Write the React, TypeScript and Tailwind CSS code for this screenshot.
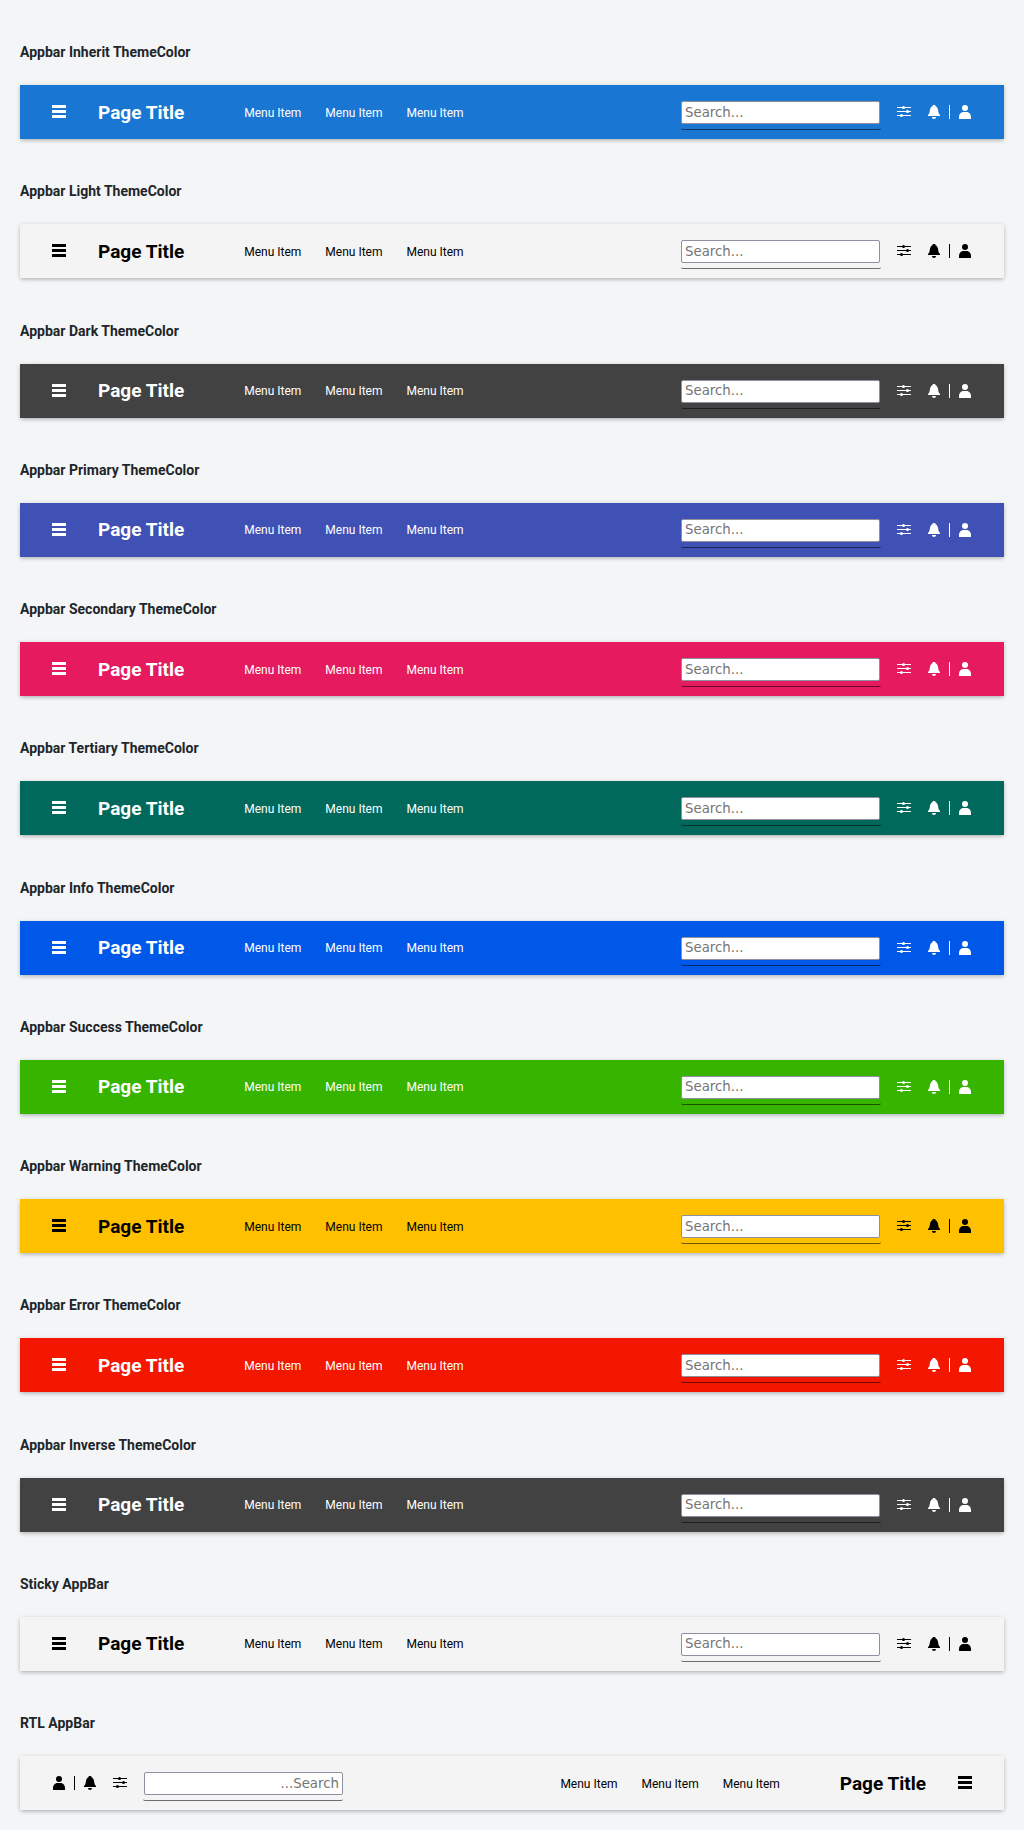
import React from "react";

type BarProps = { tone: string; dir?: "ltr" | "rtl"; label: string };

const bars: BarProps[] = [
  { label: "Appbar Inherit ThemeColor", tone: "bg-[#1976d2] text-white" },
  { label: "Appbar Light ThemeColor", tone: "bg-[#f4f4f4] text-black" },
  { label: "Appbar Dark ThemeColor", tone: "bg-[#424242] text-white" },
  { label: "Appbar Primary ThemeColor", tone: "bg-[#3f51b5] text-white" },
  { label: "Appbar Secondary ThemeColor", tone: "bg-[#e51a5f] text-white" },
  { label: "Appbar Tertiary ThemeColor", tone: "bg-[#00695c] text-white" },
  { label: "Appbar Info ThemeColor", tone: "bg-[#0058e9] text-white" },
  { label: "Appbar Success ThemeColor", tone: "bg-[#37b400] text-white" },
  { label: "Appbar Warning ThemeColor", tone: "bg-[#ffc000] text-black" },
  { label: "Appbar Error ThemeColor", tone: "bg-[#f31700] text-white" },
  { label: "Appbar Inverse ThemeColor", tone: "bg-[#424242] text-white" },
  { label: "Sticky AppBar", tone: "bg-[#f4f4f4] text-black" },
  { label: "RTL AppBar", tone: "bg-[#f4f4f4] text-black", dir: "rtl" },
];

function Icon({ children }: { children: React.ReactNode }) {
  return (
    <svg viewBox="0 0 16 16" className="block size-4" fill="currentColor" aria-hidden="true">
      {children}
    </svg>
  );
}

function AppBar({ tone, dir = "ltr", label }: BarProps) {
  return (
    <header
      dir={dir}
      aria-label={label}
      className={`flex h-[54px] items-center px-4 shadow-[0_2px_4px_-1px_rgba(0,0,0,0.2),0_1px_5px_0_rgba(0,0,0,0.14)] ${tone}`}
    >
      <button type="button" aria-label="Menu" className="ms-[15px] shrink-0">
        <Icon>
          <path d="M1 1h14v3H1zM1 6h14v3H1zM1 11h14v3H1z" />
        </Icon>
      </button>
      <h1 className="ms-[31px] shrink-0 whitespace-nowrap pt-px text-[19px] leading-7 font-bold">Page Title</h1>
      <nav className="ms-[60px] pt-px">
        <ul className="flex gap-6 text-xs">
          {[1, 2, 3].map((n) => (
            <li key={n}>
              <a href="#" className="whitespace-nowrap">
                Menu Item
              </a>
            </li>
          ))}
        </ul>
      </nav>
      <div className="ms-auto flex items-center">
        <span className="mt-[7px] flex w-[200px] rounded-[2px] border-b border-black/55 pb-[5px]">
          <input
            type="text"
            placeholder="Search..."
            aria-label={`Search ${label}`}
            className="h-[23px] w-[199px] rounded-[2px] border border-[#8f8f9d] bg-white px-[3px] pb-px font-['DejaVu_Sans',sans-serif] [font-size:revert] leading-5 text-black placeholder:text-[#757575]"
          />
        </span>
        <button type="button" aria-label="Settings" className="ms-[15px]">
          <Icon>
            <path d="M1 3h14v1H1zM1 7h14v1H1zM1 11h14v1H1z" />
            <circle cx="7.5" cy="3.5" r="1.5" />
            <circle cx="11.5" cy="7.5" r="1.5" />
            <circle cx="5.5" cy="11.5" r="1.5" />
          </Icon>
        </button>
        <button type="button" aria-label="Notifications" className="ms-[14px]">
          <Icon>
            <path d="M8 1c1 0 1.500.5 1.700 1.200C11.300 3 12 5 12.200 7c.2 2 .8 3 1.800 4v1H2v-1c1-1 1.600-2 1.800-4C4 5 4.700 3 6.300 2.200 6.500 1.500 7 1 8 1zM6 13h4c0 1-.8 2-2 2s-2-1-2-2z" />
          </Icon>
        </button>
        <span className="ms-[7px] h-[14px] w-px bg-current" />
        <button type="button" aria-label="Account" className="ms-[7px] me-[15px]">
          <Icon>
            <circle cx="8" cy="4" r="3" />
            <path d="M2 15v-2c0-2.800 2-5 4.500-5h3c2.500 0 4.500 2.200 4.500 5v2z" />
          </Icon>
        </button>
      </div>
    </header>
  );
}

export default function App() {
  return (
    <main className="flex min-h-screen flex-col justify-between gap-8 bg-[#f3f5f7] px-5 pt-[42px] pb-5 font-[Roboto,sans-serif]">
      {bars.map((bar) => (
        <section key={bar.label}>
          <h2 className="mb-[23px] text-sm font-bold text-[#212529]">{bar.label}</h2>
          <AppBar {...bar} />
        </section>
      ))}
    </main>
  );
}
